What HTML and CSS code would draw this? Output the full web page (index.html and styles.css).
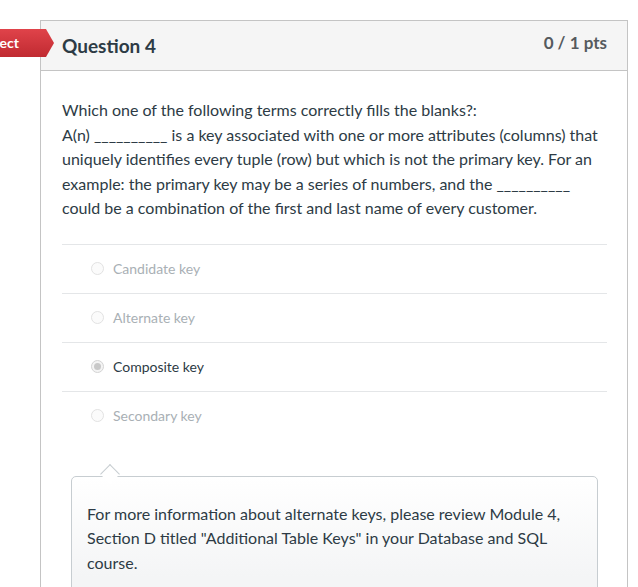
FILE: index.html
```html
<!DOCTYPE html>
<html lang="en">
<head>
<meta charset="utf-8">
<title>Question 4</title>
<link rel="stylesheet" href="styles.css">
</head>
<body>
<div class="page">
  <div class="flag">Incorrect</div>
  <div class="card">
    <div class="card-header">
      <span class="title">Question 4</span>
      <span class="points">0 / 1 pts</span>
    </div>
    <div class="card-body">
      <div class="question-text">Which one of the following terms correctly fills the blanks?:<br>A(n) __________ is a key associated with one or more attributes (columns) that uniquely identifies every tuple (row) but which is not the primary key. For an example: the primary key may be a series of numbers, and the __________ could be a combination of the first and last name of every customer.</div>
      <div class="answers">
        <div class="answer"><span class="radio"></span><span class="label">Candidate key</span></div>
        <div class="answer"><span class="radio"></span><span class="label">Alternate key</span></div>
        <div class="answer selected"><span class="radio"></span><span class="label">Composite key</span></div>
        <div class="answer"><span class="radio"></span><span class="label">Secondary key</span></div>
      </div>
      <div class="comment">
        <p>For more information about alternate keys, please review Module 4, Section D titled "Additional Table Keys" in your Database and SQL course.</p>
      </div>
    </div>
  </div>
</div>
</body>
</html>
```

FILE: styles.css
```css
html, body {
  margin: 0;
  padding: 0;
  background: #ffffff;
}
body {
  font-family: Lato, "Noto Sans", sans-serif;
  color: #2d3b45;
  overflow: hidden;
}
.page {
  position: relative;
  padding: 20px 10px 0 40px;
}
.flag {
  position: absolute;
  left: -46px;
  top: 29px;
  width: 100px;
  height: 28px;
  box-sizing: border-box;
  padding: 0 35px 0 0;
  text-align: right;
  line-height: 27px;
  font-size: 14px;
  font-weight: 700;
  color: #ffffff;
  background: linear-gradient(#e0434a, #c02a31);
  clip-path: polygon(0 0, 92px 0, 100px 14px, 92px 28px, 0 28px);
  z-index: 2;
}
.card {
  border: 1px solid #c4c4c4;
  border-bottom: none;
  height: 700px;
  box-sizing: border-box;
}
.card-header {
  height: 49px;
  background: #f5f5f5;
  border-bottom: 1px solid #c4c4c4;
  display: flex;
  align-items: center;
  justify-content: space-between;
  padding: 0 20px 0 21px;
}
.title {
  font-size: 19px;
  font-weight: 700;
  color: #2d3b45;
}
.points {
  font-size: 17px;
  font-weight: 700;
  color: #555a5e;
  margin-top: -6px;
}
.card-body {
  padding: 27px 20px 0 21px;
}
.question-text {
  font-size: 16px;
  line-height: 24.5px;
  padding-bottom: 23px;
}
.answer {
  display: flex;
  align-items: center;
  height: 48px;
  border-top: 1px solid #e4e6e8;
  padding-left: 29px;
}
.radio {
  width: 11px;
  height: 11px;
  border-radius: 50%;
  border: 1px solid #e2e2e2;
  background: #fbfbfb;
  margin-right: 9px;
  position: relative;
}
.answer.selected .radio {
  border-color: #d4d4d4;
  background: #f4f4f4;
}
.answer.selected .radio::after {
  content: "";
  position: absolute;
  left: 2px;
  top: 2px;
  width: 7px;
  height: 7px;
  border-radius: 50%;
  background: #c8c8c8;
}
.label {
  font-size: 14px;
  color: #a9b0b5;
}
.answer.selected .label {
  color: #2d3b45;
}
.comment {
  position: relative;
  margin: 36px 9px 0 9px;
  border: 1px solid #c7cdd1;
  border-radius: 5px;
  background: linear-gradient(#ffffff, #f4f5f6 100px);
  padding: 25px 16px 20px 15px;
}
.comment::before {
  content: "";
  position: absolute;
  left: 31px;
  top: -10px;
  width: 13px;
  height: 13px;
  background: #ffffff;
  border-left: 1px solid #c7cdd1;
  border-top: 1px solid #c7cdd1;
  transform: rotate(45deg);
}
.comment p {
  margin: 0;
  font-size: 16px;
  line-height: 24.5px;
}
```
